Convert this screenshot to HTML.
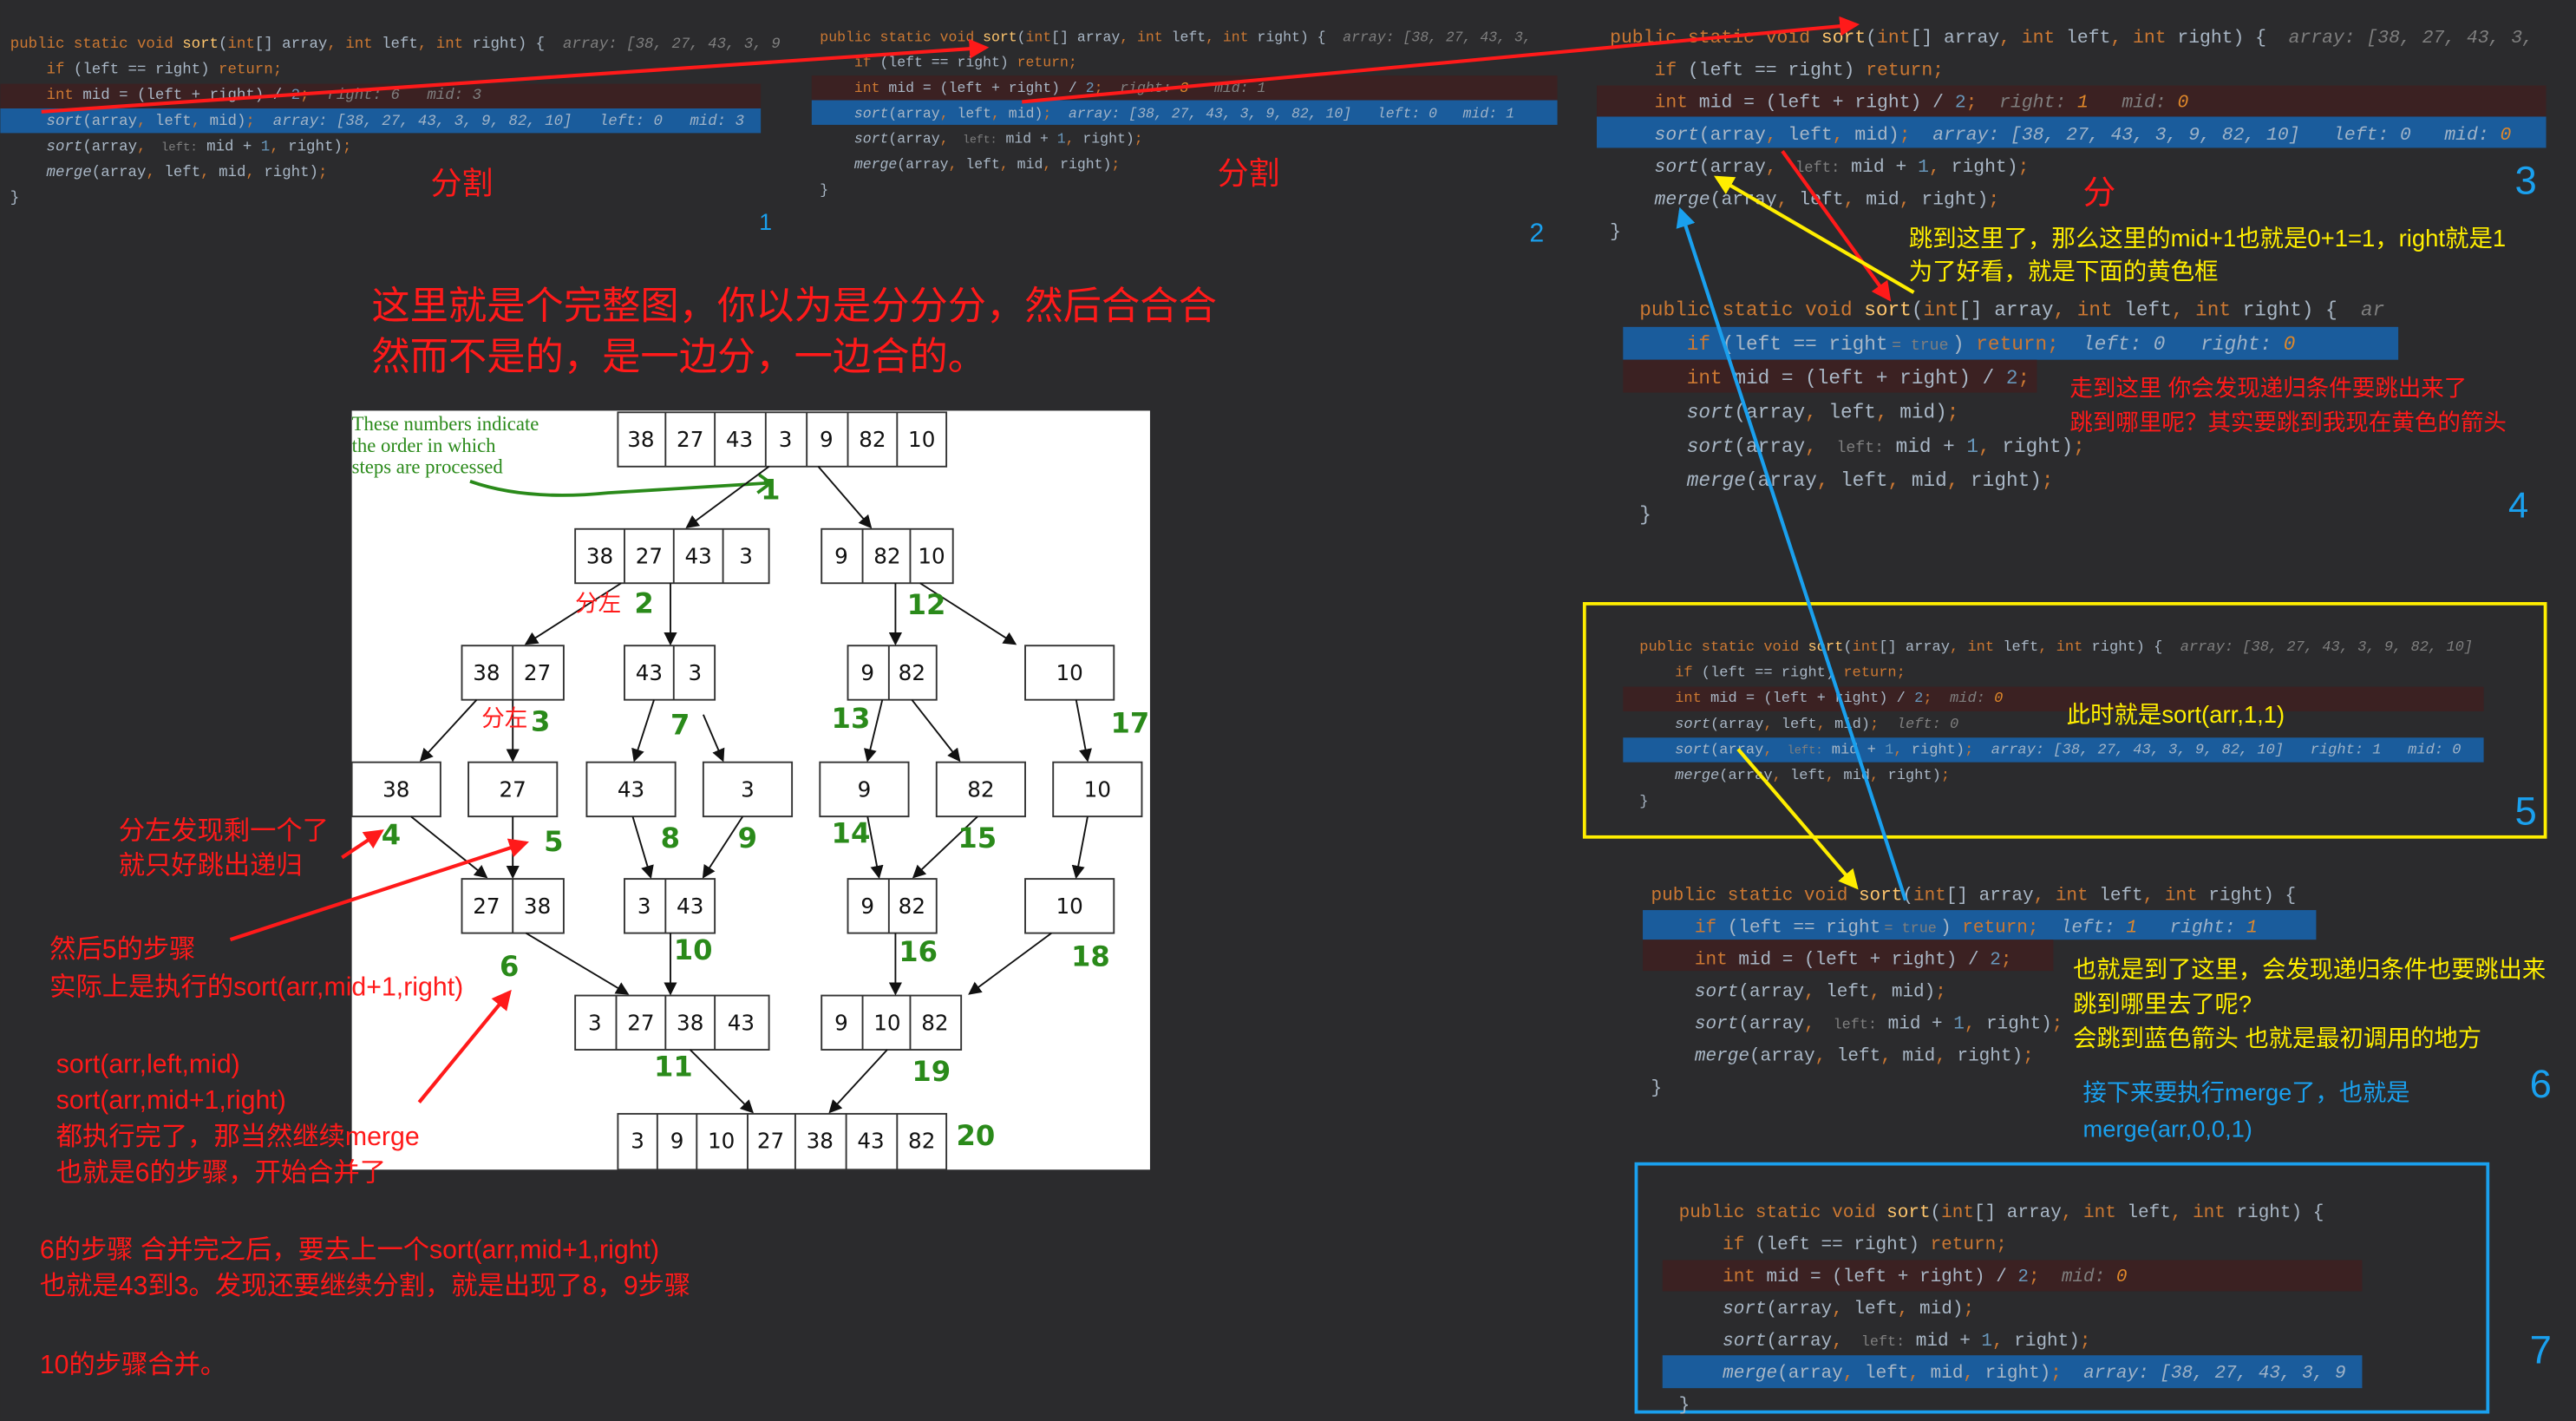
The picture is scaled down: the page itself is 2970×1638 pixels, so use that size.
<!DOCTYPE html>
<html><head><meta charset="utf-8"><style>
html,body{margin:0;padding:0;background:#2b2b2d;}
svg{display:block}
.c{font-family:"Liberation Mono",monospace;font-size:10px;fill:#a9b7c6}
.c text{white-space:pre}
.k{fill:#cc7832}.f{fill:#ffc66d}.n{fill:#6897bb}.h{fill:#7f7f7f;font-style:italic}.hb{fill:#9fb3c8;font-style:italic}.i{font-style:italic}.o{fill:#e0882a;font-style:italic}.lb{fill:#7f7f7f;font-size:8px}
.z{font-family:"Liberation Sans","Noto Sans CJK SC",sans-serif}
.bx{fill:#fff;stroke:#333;stroke-width:1}
.bt{font-family:"DejaVu Sans",sans-serif;font-size:13px;fill:#111;text-anchor:middle}
.g{font-family:"DejaVu Sans",sans-serif;font-size:17px;fill:#2a8a1a;font-weight:bold}
.ln{stroke:#111;stroke-width:1;marker-end:url(#ab)}
</style></head><body>
<svg width="2970" height="1638" viewBox="0 0 1568 865" xmlns="http://www.w3.org/2000/svg">
<defs>
<marker id="ab" markerWidth="8" markerHeight="8" refX="7" refY="4" orient="auto" markerUnits="userSpaceOnUse"><path d="M0,0 L8,4 L0,8 z" fill="#111"/></marker>
<marker id="ar" markerWidth="12" markerHeight="12" refX="10" refY="6" orient="auto" markerUnits="userSpaceOnUse"><path d="M0,0 L12,6 L0,12 z" fill="#ff1a1a"/></marker>
<marker id="ay" markerWidth="12" markerHeight="12" refX="10" refY="6" orient="auto" markerUnits="userSpaceOnUse"><path d="M0,0 L12,6 L0,12 z" fill="#ffee00"/></marker>
<marker id="abl" markerWidth="12" markerHeight="12" refX="10" refY="6" orient="auto" markerUnits="userSpaceOnUse"><path d="M0,0 L12,6 L0,12 z" fill="#1aa0ee"/></marker>
</defs>
<rect width="1568" height="865" fill="#2b2b2d"/>

<rect x="0" y="51" width="463" height="15" fill="#3b2122"/>
<rect x="0" y="66" width="463" height="15" fill="#1a5c9c"/>
<rect x="494" y="46" width="454" height="15" fill="#3b2122"/>
<rect x="494" y="61" width="454" height="15" fill="#1a5c9c"/>
<rect x="972" y="52" width="578" height="19" fill="#3b2122"/>
<rect x="972" y="71" width="578" height="19" fill="#1a5c9c"/>
<rect x="988" y="199" width="472" height="20" fill="#1a5c9c"/>
<rect x="988" y="219" width="252" height="20" fill="#3b2122"/>
<rect x="988" y="418" width="524" height="15" fill="#3b2122"/>
<rect x="988" y="449" width="524" height="15" fill="#1a5c9c"/>
<rect x="1000" y="554" width="410" height="18" fill="#1a5c9c"/>
<rect x="1000" y="572" width="250" height="19" fill="#3b2122"/>
<rect x="1012" y="767" width="426" height="19" fill="#3b2122"/>
<rect x="1012" y="825" width="426" height="20" fill="#1a5c9c"/>

<g transform="translate(6,29) scale(0.92)" class="c">
<text x="0" y="0"><tspan class="k">public static void </tspan><tspan class="f">sort</tspan>(<tspan class="k">int</tspan>[] array<tspan class="k">, int </tspan>left<tspan class="k">, int </tspan>right) {<tspan class="h" dx="12">array: [38, 27, 43, 3, 9</tspan></text>
<text x="24" y="17"><tspan class="k">if </tspan>(left == right) <tspan class="k">return;</tspan></text>
<text x="24" y="34"><tspan class="k">int </tspan>mid = (left + right) / <tspan class="n">2</tspan><tspan class="k">;</tspan><tspan class="h" dx="12">right: 6</tspan><tspan class="h" dx="18">mid: 3</tspan></text>
<text x="24" y="51"><tspan class="i">sort</tspan>(array<tspan class="k">, </tspan>left<tspan class="k">, </tspan>mid)<tspan class="k">;</tspan><tspan class="hb" dx="12">array: [38, 27, 43, 3, 9, 82, 10]</tspan><tspan class="hb" dx="18">left: 0</tspan><tspan class="hb" dx="18">mid: 3</tspan></text>
<text x="24" y="68"><tspan class="i">sort</tspan>(array<tspan class="k">, </tspan><tspan class="lb" dx="4">left:</tspan> mid + <tspan class="n">1</tspan><tspan class="k">, </tspan>right)<tspan class="k">;</tspan></text>
<text x="24" y="85"><tspan class="i">merge</tspan>(array<tspan class="k">, </tspan>left<tspan class="k">, </tspan>mid<tspan class="k">, </tspan>right)<tspan class="k">;</tspan></text>
<text x="0" y="102">}</text>
</g>
<text x="262" y="118" class="z" font-size="19" fill="#ff1a1a">分割</text>
<text x="462" y="140" class="z" font-size="14" fill="#1aa0ee">1</text>

<g transform="translate(499,25) scale(0.87)" class="c">
<text x="0" y="0"><tspan class="k">public static void </tspan><tspan class="f">sort</tspan>(<tspan class="k">int</tspan>[] array<tspan class="k">, int </tspan>left<tspan class="k">, int </tspan>right) {<tspan class="h" dx="12">array: [38, 27, 43, 3,</tspan></text>
<text x="24" y="17.8"><tspan class="k">if </tspan>(left == right) <tspan class="k">return;</tspan></text>
<text x="24" y="35.6"><tspan class="k">int </tspan>mid = (left + right) / <tspan class="n">2</tspan><tspan class="k">;</tspan><tspan class="h" dx="12">right: </tspan><tspan class="o">3</tspan><tspan class="h" dx="18">mid: 1</tspan></text>
<text x="24" y="53.4"><tspan class="i">sort</tspan>(array<tspan class="k">, </tspan>left<tspan class="k">, </tspan>mid)<tspan class="k">;</tspan><tspan class="hb" dx="12">array: [38, 27, 43, 3, 9, 82, 10]</tspan><tspan class="hb" dx="18">left: 0</tspan><tspan class="hb" dx="18">mid: 1</tspan></text>
<text x="24" y="71.2"><tspan class="i">sort</tspan>(array<tspan class="k">, </tspan><tspan class="lb" dx="4">left:</tspan> mid + <tspan class="n">1</tspan><tspan class="k">, </tspan>right)<tspan class="k">;</tspan></text>
<text x="24" y="89"><tspan class="i">merge</tspan>(array<tspan class="k">, </tspan>left<tspan class="k">, </tspan>mid<tspan class="k">, </tspan>right)<tspan class="k">;</tspan></text>
<text x="0" y="106.8">}</text>
</g>
<text x="741" y="112" class="z" font-size="19" fill="#ff1a1a">分割</text>
<text x="931" y="147" class="z" font-size="16" fill="#1aa0ee">2</text>

<g transform="translate(980,26) scale(1.13)" class="c">
<text x="0" y="0"><tspan class="k">public static void </tspan><tspan class="f">sort</tspan>(<tspan class="k">int</tspan>[] array<tspan class="k">, int </tspan>left<tspan class="k">, int </tspan>right) {<tspan class="h" dx="12">array: [38, 27, 43, 3,</tspan></text>
<text x="24" y="17.4"><tspan class="k">if </tspan>(left == right) <tspan class="k">return;</tspan></text>
<text x="24" y="34.8"><tspan class="k">int </tspan>mid = (left + right) / <tspan class="n">2</tspan><tspan class="k">;</tspan><tspan class="h" dx="12">right: </tspan><tspan class="o">1</tspan><tspan class="h" dx="18">mid: </tspan><tspan class="o">0</tspan></text>
<text x="24" y="52.2"><tspan class="i">sort</tspan>(array<tspan class="k">, </tspan>left<tspan class="k">, </tspan>mid)<tspan class="k">;</tspan><tspan class="hb" dx="12">array: [38, 27, 43, 3, 9, 82, 10]</tspan><tspan class="hb" dx="18">left: 0</tspan><tspan class="hb" dx="18">mid: </tspan><tspan class="o">0</tspan></text>
<text x="24" y="69.6"><tspan class="i">sort</tspan>(array<tspan class="k">, </tspan><tspan class="lb" dx="4">left:</tspan> mid + <tspan class="n">1</tspan><tspan class="k">, </tspan>right)<tspan class="k">;</tspan></text>
<text x="24" y="87"><tspan class="i">merge</tspan>(array<tspan class="k">, </tspan>left<tspan class="k">, </tspan>mid<tspan class="k">, </tspan>right)<tspan class="k">;</tspan></text>
<text x="0" y="104.4">}</text>
</g>
<text x="1268" y="124" class="z" font-size="20" fill="#ff1a1a">分</text>
<text x="1531" y="118" class="z" font-size="24" fill="#1aa0ee">3</text>
<text x="1162" y="150" class="z" font-size="14.5" fill="#ffee00">跳到这里了，那么这里的mid+1也就是0+1=1，right就是1</text>
<text x="1162" y="170" class="z" font-size="14.5" fill="#ffee00">为了好看，就是下面的黄色框</text>

<g transform="translate(998,192) scale(1.2)" class="c">
<text x="0" y="0"><tspan class="k">public static void </tspan><tspan class="f">sort</tspan>(<tspan class="k">int</tspan>[] array<tspan class="k">, int </tspan>left<tspan class="k">, int </tspan>right) {<tspan class="h" dx="12">ar</tspan></text>
<text x="24" y="17.3"><tspan class="k">if </tspan>(left == right<tspan class="lb" dx="2">= true</tspan><tspan dx="2">)</tspan> <tspan class="k">return;</tspan><tspan class="hb" dx="12">left: 0</tspan><tspan class="hb" dx="18">right: </tspan><tspan class="o">0</tspan></text>
<text x="24" y="34.6"><tspan class="k">int </tspan>mid = (left + right) / <tspan class="n">2</tspan><tspan class="k">;</tspan></text>
<text x="24" y="51.9"><tspan class="i">sort</tspan>(array<tspan class="k">, </tspan>left<tspan class="k">, </tspan>mid)<tspan class="k">;</tspan></text>
<text x="24" y="69.2"><tspan class="i">sort</tspan>(array<tspan class="k">, </tspan><tspan class="lb" dx="4">left:</tspan> mid + <tspan class="n">1</tspan><tspan class="k">, </tspan>right)<tspan class="k">;</tspan></text>
<text x="24" y="86.5"><tspan class="i">merge</tspan>(array<tspan class="k">, </tspan>left<tspan class="k">, </tspan>mid<tspan class="k">, </tspan>right)<tspan class="k">;</tspan></text>
<text x="0" y="103.8">}</text>
</g>
<text x="1260" y="241" class="z" font-size="14" fill="#ff1a1a">走到这里 你会发现递归条件要跳出来了</text>
<text x="1260" y="262" class="z" font-size="14" fill="#ff1a1a">跳到哪里呢？其实要跳到我现在黄色的箭头</text>
<text x="1527" y="315" class="z" font-size="22" fill="#1aa0ee">4</text>

<rect x="964.5" y="367.5" width="585" height="142" fill="none" stroke="#ffee00" stroke-width="2"/>
<g transform="translate(998,396) scale(0.9)" class="c">
<text x="0" y="0"><tspan class="k">public static void </tspan><tspan class="f">sort</tspan>(<tspan class="k">int</tspan>[] array<tspan class="k">, int </tspan>left<tspan class="k">, int </tspan>right) {<tspan class="h" dx="12">array: [38, 27, 43, 3, 9, 82, 10]</tspan></text>
<text x="24" y="17.4"><tspan class="k">if </tspan>(left == right) <tspan class="k">return;</tspan></text>
<text x="24" y="34.8"><tspan class="k">int </tspan>mid = (left + right) / <tspan class="n">2</tspan><tspan class="k">;</tspan><tspan class="h" dx="12">mid: </tspan><tspan class="o">0</tspan></text>
<text x="24" y="52.2"><tspan class="i">sort</tspan>(array<tspan class="k">, </tspan>left<tspan class="k">, </tspan>mid)<tspan class="k">;</tspan><tspan class="h" dx="12">left: 0</tspan></text>
<text x="24" y="69.6"><tspan class="i">sort</tspan>(array<tspan class="k">, </tspan><tspan class="lb" dx="4">left:</tspan> mid + <tspan class="n">1</tspan><tspan class="k">, </tspan>right)<tspan class="k">;</tspan><tspan class="hb" dx="12">array: [38, 27, 43, 3, 9, 82, 10]</tspan><tspan class="hb" dx="18">right: 1</tspan><tspan class="hb" dx="18">mid: 0</tspan></text>
<text x="24" y="87"><tspan class="i">merge</tspan>(array<tspan class="k">, </tspan>left<tspan class="k">, </tspan>mid<tspan class="k">, </tspan>right)<tspan class="k">;</tspan></text>
<text x="0" y="104.4">}</text>
</g>
<text x="1258" y="440" class="z" font-size="14.5" fill="#ffee00">此时就是sort(arr,1,1)</text>
<text x="1531" y="502" class="z" font-size="24" fill="#1aa0ee">5</text>

<g transform="translate(1005,548) scale(1.11)" class="c">
<text x="0" y="0"><tspan class="k">public static void </tspan><tspan class="f">sort</tspan>(<tspan class="k">int</tspan>[] array<tspan class="k">, int </tspan>left<tspan class="k">, int </tspan>right) {</text>
<text x="24" y="17.6"><tspan class="k">if </tspan>(left == right<tspan class="lb" dx="2">= true</tspan><tspan dx="2">)</tspan> <tspan class="k">return;</tspan><tspan class="hb" dx="12">left: </tspan><tspan class="o">1</tspan><tspan class="hb" dx="18">right: </tspan><tspan class="o">1</tspan></text>
<text x="24" y="35.2"><tspan class="k">int </tspan>mid = (left + right) / <tspan class="n">2</tspan><tspan class="k">;</tspan></text>
<text x="24" y="52.8"><tspan class="i">sort</tspan>(array<tspan class="k">, </tspan>left<tspan class="k">, </tspan>mid)<tspan class="k">;</tspan></text>
<text x="24" y="70.4"><tspan class="i">sort</tspan>(array<tspan class="k">, </tspan><tspan class="lb" dx="4">left:</tspan> mid + <tspan class="n">1</tspan><tspan class="k">, </tspan>right)<tspan class="k">;</tspan></text>
<text x="24" y="88"><tspan class="i">merge</tspan>(array<tspan class="k">, </tspan>left<tspan class="k">, </tspan>mid<tspan class="k">, </tspan>right)<tspan class="k">;</tspan></text>
<text x="0" y="105.6">}</text>
</g>
<text x="1262" y="595" class="z" font-size="14.4" fill="#ffee00">也就是到了这里，会发现递归条件也要跳出来</text>
<text x="1262" y="616" class="z" font-size="14.4" fill="#ffee00">跳到哪里去了呢?</text>
<text x="1262" y="637" class="z" font-size="14.4" fill="#ffee00">会跳到蓝色箭头 也就是最初调用的地方</text>
<text x="1268" y="670" class="z" font-size="14.4" fill="#1aa0ee">接下来要执行merge了，也就是</text>
<text x="1268" y="692" class="z" font-size="14.4" fill="#1aa0ee">merge(arr,0,0,1)</text>
<text x="1540" y="668" class="z" font-size="24" fill="#1aa0ee">6</text>

<rect x="996" y="708.5" width="518.5" height="151" fill="none" stroke="#1aa0ee" stroke-width="2"/>
<g transform="translate(1022,741) scale(1.11)" class="c">
<text x="0" y="0"><tspan class="k">public static void </tspan><tspan class="f">sort</tspan>(<tspan class="k">int</tspan>[] array<tspan class="k">, int </tspan>left<tspan class="k">, int </tspan>right) {</text>
<text x="24" y="17.6"><tspan class="k">if </tspan>(left == right) <tspan class="k">return;</tspan></text>
<text x="24" y="35.2"><tspan class="k">int </tspan>mid = (left + right) / <tspan class="n">2</tspan><tspan class="k">;</tspan><tspan class="h" dx="12">mid: </tspan><tspan class="o">0</tspan></text>
<text x="24" y="52.8"><tspan class="i">sort</tspan>(array<tspan class="k">, </tspan>left<tspan class="k">, </tspan>mid)<tspan class="k">;</tspan></text>
<text x="24" y="70.4"><tspan class="i">sort</tspan>(array<tspan class="k">, </tspan><tspan class="lb" dx="4">left:</tspan> mid + <tspan class="n">1</tspan><tspan class="k">, </tspan>right)<tspan class="k">;</tspan></text>
<text x="24" y="88"><tspan class="i">merge</tspan>(array<tspan class="k">, </tspan>left<tspan class="k">, </tspan>mid<tspan class="k">, </tspan>right)<tspan class="k">;</tspan><tspan class="hb" dx="12">array: [38, 27, 43, 3, 9</tspan></text>
<text x="0" y="105.6">}</text>
</g>
<text x="1540" y="830" class="z" font-size="24" fill="#1aa0ee">7</text>

<text x="226" y="194" class="z" font-size="23.4" fill="#ff1a1a">这里就是个完整图，你以为是分分分，然后合合合</text>
<text x="226" y="225" class="z" font-size="23.4" fill="#ff1a1a">然而不是的，是一边分，一边合的。</text>

<rect x="214" y="250" width="486" height="462" fill="#fff"/>
<g font-family="Liberation Serif,serif" font-size="12" fill="#2a8a1a">
<text x="214" y="262">These numbers indicate</text>
<text x="214" y="275">the order in which</text>
<text x="214" y="288">steps are processed</text>
</g>
<path d="M286,293 Q320,305 370,300 Q420,297 468,294" stroke="#2a8a1a" stroke-width="2" fill="none"/>
<path d="M462,289 L469,294 L461,300" stroke="#2a8a1a" stroke-width="2" fill="none"/>

<g>
<rect class="bx" x="376" y="251" width="200" height="33"/>
<path d="M405,251V284M435,251V284M466,251V284M491,251V284M516,251V284M546,251V284" stroke="#333"/>
<text class="bt" y="272"><tspan x="390">38</tspan><tspan x="420">27</tspan><tspan x="450">43</tspan><tspan x="478">3</tspan><tspan x="503">9</tspan><tspan x="531">82</tspan><tspan x="561">10</tspan></text>
<rect class="bx" x="350" y="322" width="118" height="33"/>
<path d="M380,322V355M410,322V355M440,322V355" stroke="#333"/>
<text class="bt" y="343"><tspan x="365">38</tspan><tspan x="395">27</tspan><tspan x="425">43</tspan><tspan x="454">3</tspan></text>
<rect class="bx" x="500" y="322" width="80" height="33"/>
<path d="M525,322V355M554,322V355" stroke="#333"/>
<text class="bt" y="343"><tspan x="512">9</tspan><tspan x="540">82</tspan><tspan x="567">10</tspan></text>
<rect class="bx" x="281" y="393" width="62" height="33"/><path d="M312,393V426" stroke="#333"/>
<text class="bt" y="414"><tspan x="296">38</tspan><tspan x="327">27</tspan></text>
<rect class="bx" x="380" y="393" width="55" height="33"/><path d="M410,393V426" stroke="#333"/>
<text class="bt" y="414"><tspan x="395">43</tspan><tspan x="423">3</tspan></text>
<rect class="bx" x="516" y="393" width="54" height="33"/><path d="M541,393V426" stroke="#333"/>
<text class="bt" y="414"><tspan x="528">9</tspan><tspan x="555">82</tspan></text>
<rect class="bx" x="624" y="393" width="54" height="33"/>
<text class="bt" x="651" y="414">10</text>
<rect class="bx" x="214" y="464" width="54" height="33"/><text class="bt" x="241" y="485">38</text>
<rect class="bx" x="285" y="464" width="54" height="33"/><text class="bt" x="312" y="485">27</text>
<rect class="bx" x="357" y="464" width="54" height="33"/><text class="bt" x="384" y="485">43</text>
<rect class="bx" x="428" y="464" width="54" height="33"/><text class="bt" x="455" y="485">3</text>
<rect class="bx" x="499" y="464" width="54" height="33"/><text class="bt" x="526" y="485">9</text>
<rect class="bx" x="570" y="464" width="54" height="33"/><text class="bt" x="597" y="485">82</text>
<rect class="bx" x="641" y="464" width="54" height="33"/><text class="bt" x="668" y="485">10</text>
<rect class="bx" x="281" y="535" width="62" height="33"/><path d="M312,535V568" stroke="#333"/>
<text class="bt" y="556"><tspan x="296">27</tspan><tspan x="327">38</tspan></text>
<rect class="bx" x="380" y="535" width="55" height="33"/><path d="M405,535V568" stroke="#333"/>
<text class="bt" y="556"><tspan x="392">3</tspan><tspan x="420">43</tspan></text>
<rect class="bx" x="516" y="535" width="54" height="33"/><path d="M541,535V568" stroke="#333"/>
<text class="bt" y="556"><tspan x="528">9</tspan><tspan x="555">82</tspan></text>
<rect class="bx" x="624" y="535" width="54" height="33"/>
<text class="bt" x="651" y="556">10</text>
<rect class="bx" x="350" y="606" width="118" height="33"/>
<path d="M375,606V639M405,606V639M435,606V639" stroke="#333"/>
<text class="bt" y="627"><tspan x="362">3</tspan><tspan x="390">27</tspan><tspan x="420">38</tspan><tspan x="451">43</tspan></text>
<rect class="bx" x="500" y="606" width="85" height="33"/>
<path d="M525,606V639M554,606V639" stroke="#333"/>
<text class="bt" y="627"><tspan x="512">9</tspan><tspan x="540">10</tspan><tspan x="569">82</tspan></text>
<rect class="bx" x="376" y="678" width="200" height="34"/>
<path d="M400,678V712M424,678V712M455,678V712M484,678V712M515,678V712M546,678V712" stroke="#333"/>
<text class="bt" y="699"><tspan x="388">3</tspan><tspan x="412">9</tspan><tspan x="439">10</tspan><tspan x="469">27</tspan><tspan x="499">38</tspan><tspan x="530">43</tspan><tspan x="561">82</tspan></text>
</g>
<g class="ln" fill="none">
<path d="M468,284L418,321"/><path d="M498,284L530,321"/>
<path d="M378,355L320,392"/><path d="M408,355V392"/><path d="M545,355V392"/><path d="M560,355L618,392"/>
<path d="M290,426L256,463"/><path d="M312,426V463"/><path d="M398,426L386,463"/><path d="M428,435L440,463"/>
<path d="M537,426L528,463"/><path d="M555,426L584,463"/><path d="M655,426L662,463"/>
<path d="M250,497L296,534"/><path d="M312,497V534"/><path d="M385,497L396,534"/><path d="M452,497L428,534"/>
<path d="M528,497L535,534"/><path d="M595,497L556,534"/><path d="M662,497L655,534"/>
<path d="M320,568L382,605"/><path d="M408,568V605"/><path d="M545,568V605"/><path d="M640,568L590,605"/>
<path d="M420,639L458,677"/><path d="M540,639L505,677"/>
</g>
<g class="g">
<text x="463" y="304">1</text><text x="386" y="373">2</text><text x="552" y="374">12</text>
<text x="323" y="445">3</text><text x="408" y="447">7</text><text x="506" y="443">13</text><text x="676" y="446">17</text>
<text x="232" y="514">4</text><text x="331" y="518">5</text><text x="402" y="516">8</text><text x="449" y="516">9</text>
<text x="506" y="513">14</text><text x="583" y="516">15</text>
<text x="304" y="594">6</text><text x="410" y="584">10</text><text x="547" y="585">16</text><text x="652" y="588">18</text>
<text x="398" y="655">11</text><text x="555" y="658">19</text><text x="582" y="697">20</text>
</g>
<text x="350" y="372" class="z" font-size="14" fill="#ff1a1a">分左</text>
<text x="293" y="442" class="z" font-size="14" fill="#ff1a1a">分左</text>

<g class="z" font-size="16" fill="#ff1a1a">
<text x="72" y="511">分左发现剩一个了</text>
<text x="72" y="532">就只好跳出递归</text>
<text x="30" y="583">然后5的步骤</text>
<text x="30" y="606">实际上是执行的sort(arr,mid+1,right)</text>
<text x="34" y="653">sort(arr,left,mid)</text>
<text x="34" y="675">sort(arr,mid+1,right)</text>
<text x="34" y="697">都执行完了，那当然继续merge</text>
<text x="34" y="719">也就是6的步骤，开始合并了</text>
<text x="24" y="766">6的步骤 合并完之后，要去上一个sort(arr,mid+1,right)</text>
<text x="24" y="788">也就是43到3。发现还要继续分割，就是出现了8，9步骤</text>
<text x="24" y="836">10的步骤合并。</text>
</g>

<g stroke-width="2.2" fill="none">
<path d="M25,68L600,29" stroke="#ff1a1a" marker-end="url(#ar)"/>
<path d="M622,62L1130,15" stroke="#ff1a1a" marker-end="url(#ar)"/>
<path d="M1085,92L1150,182" stroke="#ff1a1a" marker-end="url(#ar)"/>
<path d="M1165,178L1045,108" stroke="#ffee00" marker-end="url(#ay)"/>
<path d="M1160,548L1023,128" stroke="#1aa0ee" marker-end="url(#abl)"/>
<path d="M1058,456L1130,540" stroke="#ffee00" marker-end="url(#ay)"/>
<path d="M208,522L232,506" stroke="#ff1a1a" marker-end="url(#ar)"/>
<path d="M140,572L320,513" stroke="#ff1a1a" marker-end="url(#ar)"/>
<path d="M255,671L310,604" stroke="#ff1a1a" marker-end="url(#ar)"/>
</g>
</svg>
</body></html>
